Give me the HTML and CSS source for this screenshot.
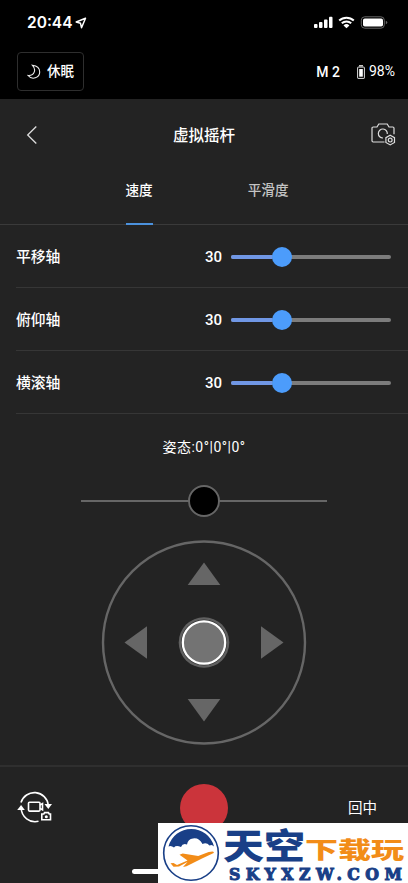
FILE: index.html
```html
<!DOCTYPE html>
<html lang="zh-CN">
<head>
  <meta charset="UTF-8" />
  <meta name="viewport" content="width=device-width, initial-scale=1.0" />
  <title>虚拟摇杆</title>
  <link rel="stylesheet" href="styles.css">
</head>
<body>

  <header class="top">
    <div class="status">
      <span class="time">20:44</span>
      <svg class="locate" width="12" height="12" viewBox="0 0 12 12"><path d="M10.500 1.200L1.200 5l4.300 1.300 1 4.400z" /></svg>
      <svg class="phone-icons" width="74" height="14" viewBox="0 0 74 14">
        <g fill="#fff">
          <rect x="0" y="8" width="3.500" height="4" rx="0.900" />
          <rect x="5" y="6" width="3.500" height="6" rx="0.900" />
          <rect x="10" y="3.500" width="3.500" height="8.500" rx="0.900" />
          <rect x="15" y="0.800" width="3.500" height="11.200" rx="0.900" />
          <rect x="49" y="2.500" width="20" height="8" rx="1.800" />
          <path d="M29.500 9.400a4.200 4.200 0 0 1 5.900 0L32.500 12.200z" />
        </g>
        <path d="M25.200 4.600a10.700 10.700 0 0 1 14.600 0M27.800 7.300a6.900 6.900 0 0 1 9.400 0" fill="none" stroke="#fff" stroke-width="2" />
        <rect x="47.300" y="0.800" width="23" height="11.400" rx="3.400" fill="none" stroke="#666" />
        <path d="M71.800 4.700v3.600q1.500-.6 1.500-1.800t-1.500-1.800z" fill="#666" />
      </svg>
    </div>

    <div class="device">
      <button class="sleep">
        <svg width="14" height="16" viewBox="0 0 14 16"><path d="M5.500 1.300C11 2 12.700 5 12.700 8c0 5.800-7.700 8.500-11.600 3.500C7.500 12 9.500 5.500 5.500 1.300z" /></svg>
        <span>休眠</span>
      </button>
      <span class="model">M 2</span>
      <svg class="cell" width="8" height="14" viewBox="0 0 8 14">
        <rect x="0.600" y="2.100" width="6.800" height="11.300" rx="0.500" fill="none" stroke="#ddd" />
        <path d="M2 .8h4" stroke="#ddd" stroke-width="1.400" />
        <rect x="2.200" y="4" width="3.600" height="7.700" fill="#fff" />
      </svg>
      <span class="percent">98%</span>
    </div>
  </header>

  <nav class="title-bar">
    <svg class="back" width="12" height="20" viewBox="0 0 12 20"><path d="M10.300 1.500L1.700 10l8.600 8.500" /></svg>
    <h1>虚拟摇杆</h1>
    <svg class="camera" width="25" height="23" viewBox="0 0 25 23">
      <path d="M13.500 19H2.200Q1 19 1 17.800V5.200Q1 4 2.200 4H6l1.800-3h8.400L18 4h3.800Q23 4 23 5.200v6" />
      <path d="M12 15a4.500 4.500 0 1 1 4.300-4" />
      <path d="M19.200 12.300l4.300 2.400v4.800l-4.300 2.400-4.300-2.400v-4.800z" />
      <circle cx="19.200" cy="17.100" r="1.900" />
    </svg>
  </nav>

  <div class="tabs">
    <div class="tab active">速度</div>
    <div class="tab">平滑度</div>
  </div>

  <div class="axes">
    <div class="axis">
      <span class="name">平移轴</span>
      <span class="value">30</span>
      <div class="slider"><div class="fill"></div><div class="thumb"></div></div>
    </div>
    <div class="axis">
      <span class="name">俯仰轴</span>
      <span class="value">30</span>
      <div class="slider"><div class="fill"></div><div class="thumb"></div></div>
    </div>
    <div class="axis">
      <span class="name">横滚轴</span>
      <span class="value">30</span>
      <div class="slider"><div class="fill"></div><div class="thumb"></div></div>
    </div>
  </div>

  <main class="control">
    <p class="pose">姿态:0°|0°|0°</p>
    <div class="roll"><div class="knob"></div></div>
    <svg class="joystick" width="206" height="205" viewBox="0 0.500 206 205">
      <circle cx="103" cy="103" r="101" fill="none" stroke="#666" stroke-width="2.400" />
      <g fill="#666">
        <path d="M103 23l16.300 22.500H86.700z" />
        <path d="M103 182l16.300-22.500H86.700z" />
        <path d="M23.500 103L46 86.700v32.600z" />
        <path d="M182.500 103L160 86.700v32.600z" />
      </g>
      <circle cx="103" cy="103" r="25.300" fill="#606060" />
      <circle cx="103" cy="103" r="23" fill="#333" />
      <circle cx="103" cy="103" r="21.200" fill="#737373" stroke="#fff" stroke-width="2.300" />
    </svg>
  </main>

  <footer class="bottom">
    <svg class="mode" width="36" height="34" viewBox="0 0 36 34">
      <g fill="none" stroke="#fff" stroke-width="1.600">
        <path d="M4 12.500A14 14 0 0 1 31.300 15M4.200 18A14 14 0 0 0 21.500 31.300" />
        <rect x="11.500" y="12.300" width="11.500" height="8.800" rx="1" />
        <path d="M23 15l2.500-1.400v6.200L23 18.400" />
        <path d="M24.800 24h2l.8-1.400h3.800l.8 1.400h1.300v5.700h-8.700z" />
      </g>
      <g fill="#fff">
        <path d="M27.500 14h7.500l-3.700 5z" />
        <path d="M.2 20h7.600L4.100 15z" />
        <circle cx="29.300" cy="26.700" r="1.500" />
      </g>
    </svg>
    <button class="record"></button>
    <span class="center">回中</span>
    <div class="home"></div>
  </footer>

  <div class="brand">
    <svg width="250" height="60" viewBox="0 0 250 60">
      <circle cx="33" cy="30" r="27.300" fill="#fff" stroke="#193f87" stroke-width="1.600" />
      <path d="M10.500 23.500a23.500 23.500 0 0 1 45.500 0q-2-2.500-4.500-1-3-3.500-7-1.500-3.500-6.500-9.500-5.500-5 .5-6 6-4.500-1.500-6 2.500-5-2-7 .5-3-2.500-5.500-1z" fill="#193f87" />
      <path d="M12.500 40.200l3-.2 3.500 2 10.500-4.500-8-5.700 3.200-1.200 15.500 2.500 10.500-4q6.300-1.700 5 1L43.500 35.700 28.500 43.200l-3.500.8 4.500-5-8.500 4.500-5.500.2z" fill="#f28c18" />
      <g class="brand-cn">
        <text class="sky" transform="translate(65 35.800) scale(1.080 .92)">天空</text>
        <text class="play" transform="translate(147 34.600) scale(1 .68)">下载玩</text>
      </g>
      <text class="domain" x="71" y="56.800" textLength="173" lengthAdjust="spacing">SKYXZW.COM</text>
    </svg>
  </div>

</body>
</html>
```
FILE: styles.css
```css
* {
  box-sizing: border-box;
}

body {
  margin: 0;
  width: 408px;
  height: 883px;
  overflow: hidden;
  position: relative;
  background: #232323;
  color: #fff;
  font-family: Roboto, "Noto Sans CJK SC", sans-serif;
}

svg {
  display: block;
  flex-shrink: 0;
}

button {
  padding: 0;
  color: inherit;
  font-family: inherit;
}

.top {
  height: 99px;
  background: #000;
}

.status {
  display: flex;
  align-items: center;
  height: 45px;
  padding: 0 20px 0 27px;
}

.time {
  font-family: Inter, sans-serif;
  font-size: 15.5px;
  font-weight: 600;
}

.locate {
  margin-left: 3px;
  fill: none;
  stroke: #fff;
  stroke-width: 1.5;
  stroke-linejoin: round;
}

.phone-icons {
  margin-left: auto;
}

.device {
  display: flex;
  align-items: center;
  height: 53px;
  padding: 0 13px 0 17px;
}

.sleep {
  display: flex;
  align-items: center;
  justify-content: center;
  gap: 6px;
  width: 67px;
  height: 39px;
  border: 1px solid #2e2e2e;
  border-radius: 4px;
  background: #000;
  font-size: 13.5px;
  font-weight: 500;
}

.sleep span {
  margin-top: -3px;
}

.sleep svg {
  fill: none;
  stroke: #eee;
  stroke-width: 1.1;
}

.model {
  margin-left: auto;
  font-size: 14px;
  font-weight: 500;
}

.cell {
  margin: 0 4px 0 17px;
}

.percent {
  margin-top: -1px;
  font-size: 14px;
}

.title-bar {
  display: grid;
  grid-template-columns: 1fr auto 1fr;
  align-items: center;
  height: 71px;
  padding: 0 12px;
}

.title-bar h1 {
  margin: -2px 0 0;
  font-size: 15.5px;
  font-weight: 500;
}

.back,
.camera {
  fill: none;
  stroke: #ddd;
  stroke-width: 1.3;
}

.back {
  margin-left: 14px;
}

.camera {
  justify-self: end;
  stroke-width: 1.2;
}

.tabs {
  display: flex;
  justify-content: center;
  gap: 95px;
  height: 55px;
  padding-left: 6px;
  border-bottom: 1px solid #3a3a3a;
}

.tab {
  height: 55px;
  line-height: 40px;
  font-size: 13.6px;
  font-weight: 500;
  color: #c4c4c4;
}

.tab.active {
  color: #fff;
  border-bottom: 2px solid #4b91dd;
}

.axes {
  padding-left: 16px;
}

.axis {
  display: flex;
  align-items: center;
  height: 63px;
  padding: 1px 17px 0 0;
  border-bottom: 1px solid #363636;
}

.name {
  margin-top: -3px;
  font-size: 14.8px;
  font-weight: 500;
}

.value {
  margin-left: auto;
  font-size: 15px;
  font-weight: 500;
}

.slider {
  display: flex;
  align-items: center;
  width: 160px;
  height: 4px;
  margin-left: 9px;
  border-radius: 2px;
  background: #7c7c7c;
}

.fill {
  width: 41px;
  height: 4px;
  border-radius: 2px 0 0 2px;
  background: #7097e5;
}

.thumb {
  width: 20px;
  height: 20px;
  border-radius: 50%;
  background: #4c9cfb;
}

.control {
  display: flex;
  flex-direction: column;
  align-items: center;
  height: 351px;
}

.pose {
  margin: 22px 0 27px;
  line-height: 22px;
  font-size: 14px;
  letter-spacing: 0.5px;
}

.roll {
  display: flex;
  align-items: center;
  justify-content: center;
  width: 246px;
  height: 2px;
  margin: 15px 0 38px;
  background: #666;
}

.knob {
  flex-shrink: 0;
  width: 32px;
  height: 32px;
  border: 2px solid #666;
  border-radius: 50%;
  background: #000;
}

.bottom {
  display: grid;
  grid-template-columns: 1fr 48px 1fr;
  grid-template-rows: 81px 1fr;
  align-items: center;
  height: 118px;
  padding: 0 17px;
  border-top: 2px solid #2f2f2f;
}

.mode {
  margin-top: -2px;
}

.record {
  width: 48px;
  height: 48px;
  border: none;
  border-radius: 50%;
  background: #cb343b;
}

.center {
  justify-self: end;
  margin: -3px 14px 0 0;
  font-size: 14.5px;
}

.home {
  grid-column: 1 / 4;
  justify-self: center;
  align-self: start;
  width: 145px;
  height: 5px;
  margin-top: 21px;
  border-radius: 3px;
  background: #fff;
}

/* site badge, sits over the bottom right corner */
.brand {
  position: absolute;
  right: 0;
  bottom: 0;
  background: #fff;
}

.brand svg {
  overflow: visible;
}

.brand-cn {
  font-family: "Noto Sans CJK SC", sans-serif;
  font-weight: 900;
}

.sky {
  font-size: 38px;
  fill: #193f87;
}

.play {
  font-size: 33px;
  fill: #f28c18;
}

.domain {
  font-family: "DejaVu Serif Condensed", "DejaVu Serif", serif;
  font-stretch: condensed;
  font-size: 17.5px;
  font-weight: 700;
  fill: #193f87;
  stroke: #193f87;
  stroke-width: 1;
}
```
